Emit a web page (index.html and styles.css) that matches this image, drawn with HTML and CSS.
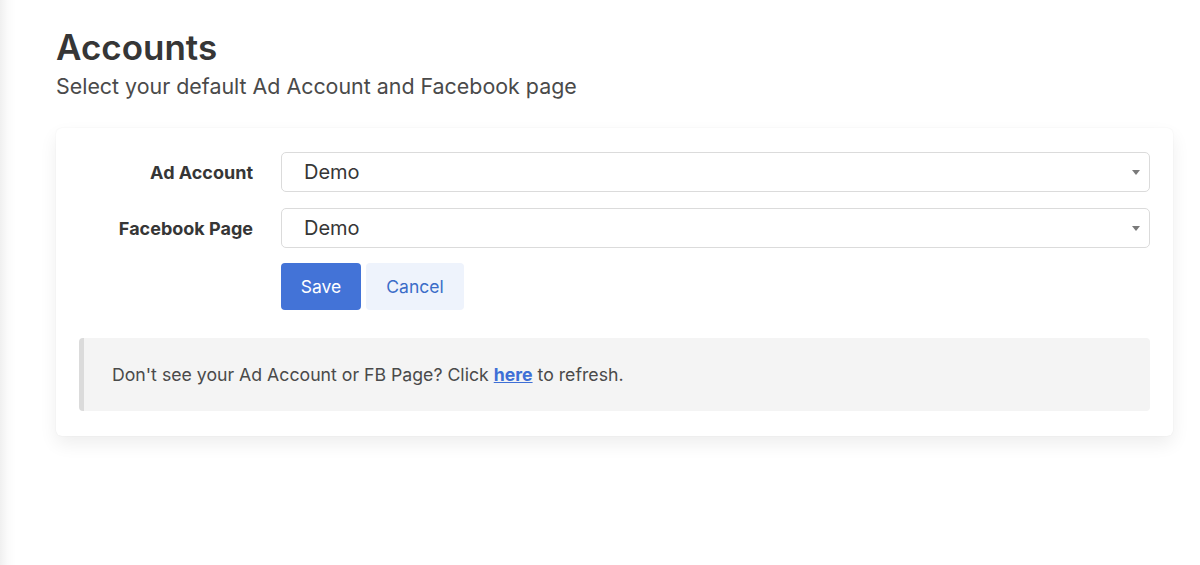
FILE: index.html
```html
<!DOCTYPE html>
<html lang="en">
<head>
<meta charset="UTF-8" />
<meta name="viewport" content="width=device-width, initial-scale=1" />
<title>Accounts</title>
<link rel="stylesheet" href="styles.css">
</head>
<body>

<div class="page">
  <h1 class="title">Accounts</h1>
  <p class="subtitle">Select your default Ad Account and Facebook page</p>

  <div class="card">
    <div class="form-row">
      <label class="field-label">Ad Account</label>
      <div class="select-box">
        <span>Demo</span>
        <i class="caret"></i>
      </div>
    </div>
    <div class="form-row">
      <label class="field-label">Facebook Page</label>
      <div class="select-box">
        <span>Demo</span>
        <i class="caret"></i>
      </div>
    </div>
    <div class="form-row">
      <span></span>
      <div class="buttons">
        <button class="btn btn-save">Save</button>
        <button class="btn btn-cancel">Cancel</button>
      </div>
    </div>

    <div class="notice">
      Don't see your Ad Account or FB Page? Click <a href="#">here</a> to refresh.
    </div>
  </div>
</div>

</body>
</html>
```

FILE: styles.css
```css
* {
  box-sizing: border-box;
}
body {
  margin: 0;
  font-family: Inter, "Noto Sans", sans-serif;
  color: #4a4a4a;
  background: linear-gradient(to right, #f0f0f0 0, #fbfbfb 8px, #fff 16px);
  height: 100vh;
  overflow: hidden;
}
.page {
  padding: 26px 27px 0 56px;
}
.title {
  margin: 0;
  font-size: 35px;
  font-weight: 600;
  color: #363636;
  line-height: 1.2;
}
.subtitle {
  margin: 5px 0 0 0;
  font-size: 21.4px;
  color: #4a4a4a;
  line-height: 1.3;
}

/* kart */
.card {
  margin-top: 27px;
  background: #fff;
  border-radius: 6px;
  box-shadow: 0 8px 18px rgba(10, 10, 10, 0.07), 0 0 2px rgba(10, 10, 10, 0.06);
  padding: 24px 23px 25px 23px;
}
.form-row {
  display: grid;
  grid-template-columns: 174px 1fr;
  column-gap: 28px;
  align-items: center;
  margin-bottom: 16px;
}
.field-label {
  text-align: right;
  font-weight: 700;
  font-size: 18px;
  color: #363636;
  padding-top: 2px;
}
.select-box {
  position: relative;
  height: 40px;
  border: 1px solid #dbdbdb;
  border-radius: 5px;
  padding: 0 40px 0 22px;
  display: flex;
  align-items: center;
  font-size: 20px;
  color: #363636;
}
.caret {
  position: absolute;
  right: 9px;
  top: 17px;
  width: 0;
  height: 0;
  border-left: 4px solid transparent;
  border-right: 4px solid transparent;
  border-top: 5px solid #7a7a7a;
}
.buttons {
  display: flex;
  gap: 5px;
  margin-top: -1px;
}
.btn {
  height: 47px;
  border: none;
  border-radius: 4px;
  font-family: inherit;
  font-size: 17.5px;
  padding: 0;
  cursor: pointer;
}
.btn-save {
  width: 80px;
  background: #4373d7;
  color: #fff;
}
.btn-cancel {
  width: 98px;
  background: #eef3fc;
  color: #3b6cc8;
}

/* bilgi kutusu */
.notice {
  margin-top: 28px;
  background: #f4f4f4;
  border-left: 5px solid #dbdbdb;
  border-radius: 4px;
  padding: 27px 28px;
  font-size: 17.7px;
  line-height: 19px;
  color: #4a4a4a;
}
.notice a {
  color: #3e6fd6;
  font-weight: 700;
}
```
